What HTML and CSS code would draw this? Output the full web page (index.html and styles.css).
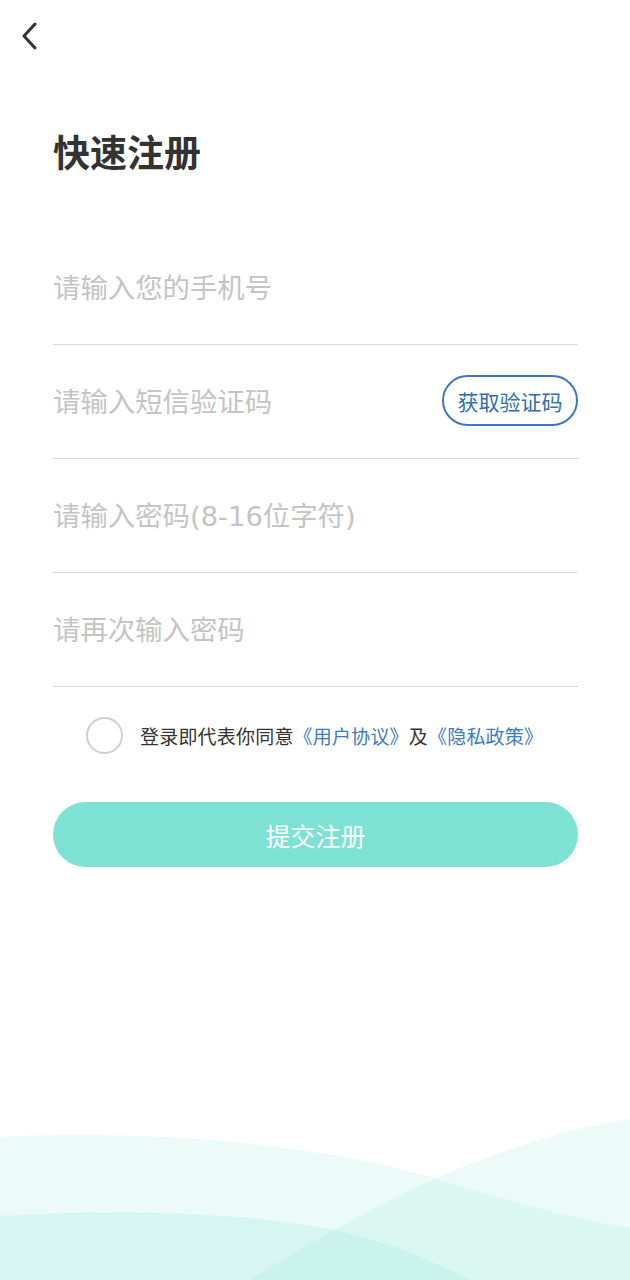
FILE: index.html
```html
<!DOCTYPE html>
<html lang="zh-CN">
<head>
<meta charset="utf-8">
<title>快速注册</title>
<link rel="stylesheet" href="styles.css">
</head>
<body>
<div class="page">
  <header class="topbar">
    <button class="back" aria-label="返回">
      <svg width="20" height="28" viewBox="0 0 20 28"><path d="M15 2 L4 14 L15 26" fill="none" stroke="#333" stroke-width="3" stroke-linecap="round" stroke-linejoin="round"/></svg>
    </button>
  </header>
  <h1 class="title">快速注册</h1>
  <form class="form">
    <div class="row"><span class="ph">请输入您的手机号</span></div>
    <div class="row"><span class="ph">请输入短信验证码</span><button type="button" class="code-btn">获取验证码</button></div>
    <div class="row"><span class="ph">请输入密码(8-16位字符)</span></div>
    <div class="row"><span class="ph">请再次输入密码</span></div>
    <div class="agree">
      <span class="radio"></span>
      <span class="agree-text">登录即代表你同意<a class="link">《用户协议》</a>及<a class="link">《隐私政策》</a></span>
    </div>
    <button type="button" class="submit">提交注册</button>
  </form>
  <div class="waves">
    <svg width="630" height="180" viewBox="0 0 630 180">
      <path d="M0 37 C120 31 300 38 434 78 C520 105 580 120 630 128 V180 H0 Z" fill="rgba(125,226,211,0.15)"/>
      <path d="M250 180 C330 130 400 92 470 64 C540 38 590 24 630 19 V180 Z" fill="rgba(125,226,211,0.15)"/>
      <path d="M0 116 C120 108 250 112 343 132 C400 145 440 165 470 180 H0 Z" fill="rgba(125,226,211,0.18)"/>
    </svg>
  </div>
</div>
</body>
</html>
```
FILE: styles.css
```css
* { box-sizing: border-box; }
html, body { margin: 0; padding: 0; background: #fff; }
body {
  font-family: Roboto, "Noto Sans CJK SC", sans-serif;
  color: #333;
}
.page {
  position: relative;
  width: 630px;
  height: 1280px;
  overflow: hidden;
}
.topbar {
  display: flex;
  padding: 22px 0 0 20px;
  height: 52px;
}
.back {
  border: 0;
  background: none;
  padding: 0;
  width: 20px;
  height: 28px;
  display: flex;
}
.title {
  margin: 78px 0 0 53px;
  font-size: 37px;
  line-height: 50px;
  font-weight: 700;
  color: #333;
}
.form {
  display: flex;
  flex-direction: column;
  padding: 51px 52px 0 53px;
}
.row {
  height: 114px;
  border-bottom: 1px solid #d9d9d9;
  display: flex;
  align-items: center;
  justify-content: space-between;
  padding-top: 3px;
}
.ph {
  font-family: "DejaVu Sans", "Noto Sans CJK SC", sans-serif;
  font-size: 27.4px;
  line-height: 40px;
  color: #c4c4c4;
}
.code-btn {
  font-family: inherit;
  font-size: 21px;
  color: #2f6db5;
  background: #fff;
  border: 2px solid #3d78c4;
  border-radius: 26px;
  width: 136px;
  height: 51px;
  padding: 0;
  margin-top: -5px;
  display: flex;
  align-items: center;
  justify-content: center;
}
.agree {
  display: flex;
  align-items: center;
  margin: 28px 0 0 33px;
  height: 40px;
}
.radio {
  width: 37px;
  height: 37px;
  border-radius: 50%;
  border: 2px solid #cfcfcf;
  flex: none;
}
.agree-text {
  margin-left: 17px;
  font-size: 19px;
  letter-spacing: 0.2px;
  color: #333;
}
.link { color: #3a7bc8; }
.submit {
  margin-top: 47px;
  height: 65px;
  border: 0;
  border-radius: 33px;
  background: #7de2d3;
  color: #fff;
  font-family: inherit;
  font-size: 25px;
  display: flex;
  align-items: center;
  justify-content: center;
}
.waves {
  position: absolute;
  left: 0;
  bottom: 0;
  width: 630px;
  height: 180px;
  display: flex;
}
```
